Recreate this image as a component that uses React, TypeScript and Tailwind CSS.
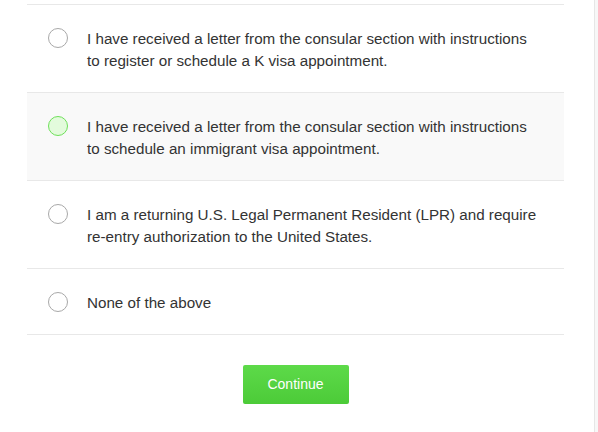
import React from "react";

const options = [
  {
    text: "I have received a letter from the consular section with instructions to register or schedule a K visa appointment.",
    active: false,
  },
  {
    text: "I have received a letter from the consular section with instructions to schedule an immigrant visa appointment.",
    active: true,
  },
  {
    text: "I am a returning U.S. Legal Permanent Resident (LPR) and require re-entry authorization to the United States.",
    active: false,
  },
  { text: "None of the above", active: false },
];

export default function App() {
  return (
    <div
      className="flex w-[598px] h-[432px] bg-white overflow-hidden"
      style={{ fontFamily: '"Liberation Sans", Arial, sans-serif' }}
    >
      <div className="w-[594px] h-full pt-[4px]">
        <div className="ml-[27px] w-[537px] border-t border-[#e8e8e8]">
          {options.map((o, i) => (
            <div
              key={i}
              className={
                o.active
                  ? "flex items-start pl-[21px] pt-[23px] pb-[20px] border-b border-[#e8e8e8] bg-[#f9f9f9]"
                  : "flex items-start pl-[21px] pt-[23px] pb-[20px] border-b border-[#e8e8e8]"
              }
            >
              <div
                className={
                  o.active
                    ? "w-[20px] h-[20px] shrink-0 rounded-full border border-[#6ee05a] bg-[#e3fbdc]"
                    : "w-[20px] h-[20px] shrink-0 rounded-full border border-[#a8a8a8] bg-white"
                }
              />
              <div className="ml-[19px] w-[455px] text-[15.2px] leading-[22px] text-[#333333]">
                {o.text}
              </div>
            </div>
          ))}
        </div>
        <div className="ml-[27px] w-[537px] flex justify-center pt-[30px]">
          <button className="w-[106px] h-[39px] rounded-[2px] bg-gradient-to-b from-[#5dda49] to-[#4ccb38] text-white text-[14px]">
            Continue
          </button>
        </div>
      </div>
      <div className="w-[4px] h-full border-l border-[#e6e6e6] bg-[#f7f7f7]" />
    </div>
  );
}
